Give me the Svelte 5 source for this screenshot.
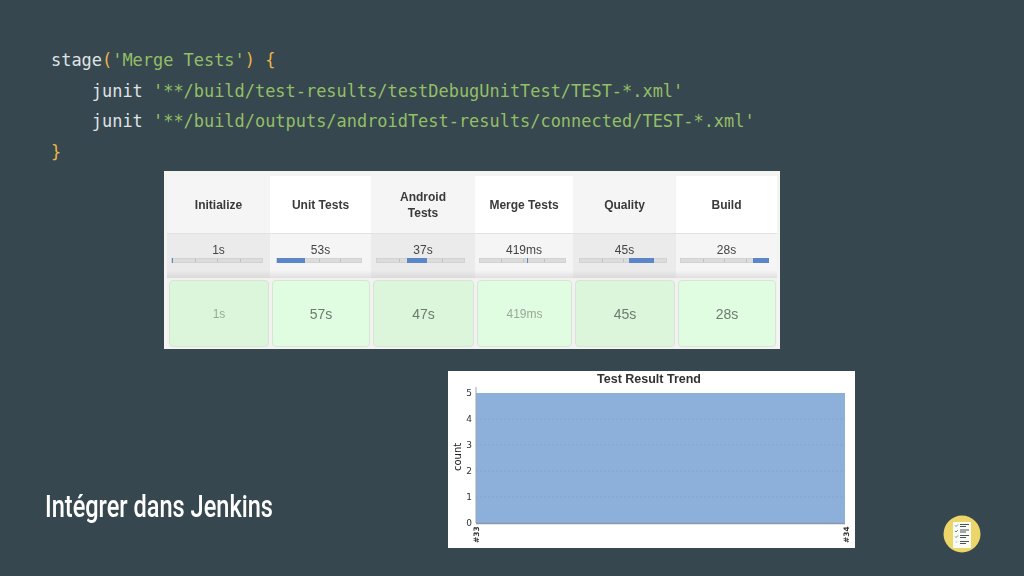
<script>
  const stages = [
    { name: ['Initialize'], time: '1s', cell: '1s', alt: true, start: 0, end: 1, left: 4, width: 92 },
    { name: ['Unit Tests'], time: '53s', cell: '57s', alt: false, start: 0, end: 28, left: 6, width: 86 },
    { name: ['Android', 'Tests'], time: '37s', cell: '47s', alt: true, start: 30, end: 50, left: 5, width: 89 },
    { name: ['Merge Tests'], time: '419ms', cell: '419ms', alt: false, start: 47, end: 48, left: 4, width: 87 },
    { name: ['Quality'], time: '45s', cell: '45s', alt: true, start: 49, end: 74, left: 6, width: 88 },
    { name: ['Build'], time: '28s', cell: '28s', alt: false, start: 72, end: 88, left: 4, width: 88 }
  ];

  const ticks = [0, 1, 2, 3, 4, 5];
  const tickY = (n) => 523 - n * 26;
</script>

<div class="slide">
  <pre class="code"><span class="plain">stage</span><span class="brace">(</span><span class="str">'Merge Tests'</span><span class="brace">) {'{'}</span>
<span class="plain">    junit </span><span class="str">'**/build/test-results/testDebugUnitTest/TEST-*.xml'</span>
<span class="plain">    junit </span><span class="str">'**/build/outputs/androidTest-results/connected/TEST-*.xml'</span>
<span class="brace">{'}'}</span></pre>

  <div class="stage-view">
    <div class="stage-grid">
      {#each stages as s}
        <div class="head" class:alt={s.alt}>
          {#each s.name as line}<span>{line}</span>{/each}
        </div>
      {/each}
      {#each stages as s}
        <div class="time" class:alt={s.alt}>
          <span>{s.time}</span>
          <div class="bar" style="margin-left: {s.left}px; width: {s.width}px">
            <i class="tick" style="left: 25%"></i>
            <i class="tick" style="left: 50%"></i>
            <i class="tick" style="left: 75%"></i>
            <i class="fill" style="left: {s.start}px; width: {s.end - s.start}px"></i>
          </div>
        </div>
      {/each}
      {#each stages as s}
        <div class="cell-wrap">
          <div class="cell" class:alt={s.alt} class:faded={s.cell === '1s' || s.cell === '419ms'}>{s.cell}</div>
        </div>
      {/each}
    </div>
  </div>

  <div class="bottom">
    <h1>Intégrer dans Jenkins</h1>
    <svg class="trend" viewBox="448 371 407 177" width="407" height="177">
      <rect x="448" y="371" width="407" height="177" fill="#fff" />
      <text x="649" y="383" class="chart-title" text-anchor="middle">Test Result Trend</text>
      <rect x="476" y="393" width="369" height="130" fill="#8db0da" />
      {#each ticks as n}
        {#if n > 0 && n < 5}
          <line x1="476" x2="845" y1={tickY(n)} y2={tickY(n)} stroke="#84a5cf" stroke-dasharray="2 2" />
        {/if}
        <text x="472" y={tickY(n) + 3} class="tick-label" text-anchor="end">{n}</text>
      {/each}
      <line x1="476" x2="476" y1="387" y2="523" stroke="#9aa5b0" />
      <line x1="476" x2="845" y1="523.5" y2="523.5" stroke="#8b98a8" stroke-width="1.5" />
      <text class="axis" transform="translate(461 471) rotate(-90)">count</text>
      <text class="build" transform="translate(479 543) rotate(-90)">#33</text>
      <text class="build" transform="translate(849 543) rotate(-90)">#34</text>
    </svg>
  </div>

  <svg class="badge" viewBox="0 0 38 38" width="38" height="38">
    <circle cx="19" cy="19" r="18.5" fill="#ecd669" />
    <rect x="10" y="7" width="18" height="26" fill="#fbfbf6" />
    <path d="M12 10.500l1 1 2-2M12 16l1 1 2-2M12 21.500l1 1 2-2" fill="none" stroke="#3f9b94" stroke-width="1" />
    <path d="M17 9.500h9M17 11.500h6M17 15h9M17 17h6M17 20.500h9M17 22.500h6M17 26.500h9M17 28.500h6" stroke="#4a5258" stroke-width="1" />
    <circle cx="13.500" cy="27" r="1" fill="#bfe0da" />
  </svg>
</div>

<style>
  :global(body) {
    margin: 0;
    background: #37474f;
  }

  .slide {
    position: relative;
    width: 1024px;
    height: 576px;
    overflow: hidden;
    background: #37474f;
    box-sizing: border-box;
    padding-top: 45px;
  }

  .code {
    margin: 0 0 0 51px;
    font-family: "DejaVu Sans Mono", monospace;
    font-size: 16.950px;
    line-height: 30.500px;
    color: #dfe4e6;
  }

  .str {
    color: #93bf67;
  }

  .brace {
    color: #e9b544;
  }

  .stage-view {
    width: 616px;
    height: 178px;
    margin: 4px 0 0 164px;
    background: #f4f5f3;
    box-sizing: border-box;
    padding: 5px 3px 1px;
    filter: blur(0.4px);
  }

  .stage-grid {
    display: grid;
    grid-template-columns: 103px 101px 104px 98px 103px 101px;
    grid-template-rows: 58px 44px 1fr;
    height: 100%;
    font-family: "Liberation Sans", sans-serif;
    color: #333;
  }

  .head {
    display: flex;
    flex-direction: column;
    align-items: center;
    justify-content: center;
    background: #fff;
    font-size: 12px;
    font-weight: 700;
    line-height: 16px;
    color: #3a3a3a;
    border-bottom: 1px solid #e2e2e2;
  }

  .head.alt {
    background: #f5f5f5;
  }

  .time {
    background: linear-gradient(#f5f5f5 82%, #e0e0e0);
    font-size: 12px;
    color: #444;
    text-align: center;
    padding-top: 8px;
    box-sizing: border-box;
  }

  .time.alt {
    background: linear-gradient(#ebebeb 82%, #dadada);
  }

  .time span {
    display: block;
    height: 16px;
    line-height: 16px;
  }

  .bar {
    position: relative;
    height: 5px;
    background: #dcdcdc;
    border: 1px solid #d2d2d2;
    box-sizing: border-box;
  }

  .tick {
    position: absolute;
    top: 0;
    width: 1px;
    height: 3px;
    background: #c0c0c0;
  }

  .fill {
    position: absolute;
    top: -1px;
    height: 5px;
    background: #5b87c8;
  }

  .cell-wrap {
    background: #f2f3f1;
    padding: 2px 1px 1px 2px;
  }

  .cell {
    display: flex;
    align-items: center;
    justify-content: center;
    height: 100%;
    box-sizing: border-box;
    background: #e1fde1;
    border: 1px solid #d8e4d6;
    border-radius: 4px;
    font-size: 14px;
    color: #6f7a6f;
  }

  .cell.alt {
    background: #dcf6dc;
  }

  .cell.faded {
    font-size: 12px;
    color: #98a898;
  }

  .bottom {
    display: flex;
    align-items: flex-end;
    margin-top: 22px;
  }

  h1 {
    width: 403px;
    margin: 0 0 23px 45px;
    font-family: Roboto, sans-serif;
    font-weight: 500;
    font-size: 31px;
    line-height: 36px;
    color: #fff;
    white-space: nowrap;
    transform: scaleX(0.76);
    transform-origin: left center;
  }

  .trend {
    display: block;
    flex: none;
    filter: blur(0.3px);
  }

  .chart-title {
    font: 700 12.500px "Liberation Sans", sans-serif;
    fill: #333;
  }

  .tick-label {
    font: 9px "DejaVu Sans", sans-serif;
    fill: #333;
  }

  .axis {
    font: 10px "DejaVu Sans", sans-serif;
    fill: #222;
  }

  .build {
    font: 700 7.500px "DejaVu Sans", sans-serif;
    fill: #333;
  }

  .badge {
    position: absolute;
    left: 943px;
    top: 515px;
  }
</style>
